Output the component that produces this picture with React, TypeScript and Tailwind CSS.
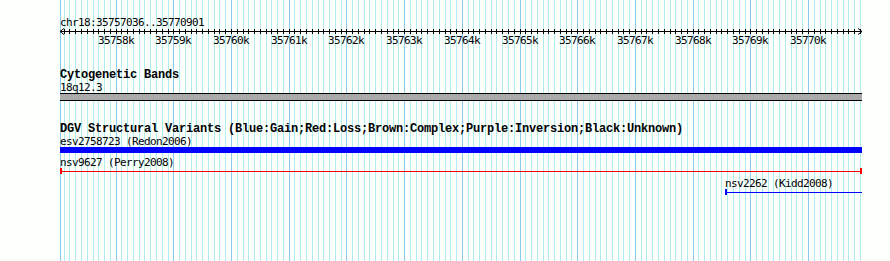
const START = 35757036;
const END = 35770901;
const LEFT = 60;
const WIDTH = 800;

const px = (bp: number) => LEFT + ((bp - START) * WIDTH) / (END - START);

const gridSteps: number[] = [];
for (let bp = 35757100; bp <= END; bp += 100) gridSteps.push(bp);

const majors = gridSteps.filter(bp => bp % 1000 === 0);

function Grid() {
  return (
    <svg className="absolute inset-0" width={890} height={261} shapeRendering="crispEdges">
      <line x1={60.5} y1={0} x2={60.5} y2={261} stroke="#8ccbf0" />
      {gridSteps.map(bp => {
        const x = Math.round(px(bp)) + 0.5;
        const major = bp % 1000 === 0;
        return (
          <line key={bp} x1={x} y1={0} x2={x} y2={261} stroke={major ? '#8ccbf0' : '#aeeeee'} />
        );
      })}
    </svg>
  );
}

function Ruler() {
  return (
    <svg width={890} height={20} className="block" shapeRendering="crispEdges">
      <line x1={60} y1={3.5} x2={862} y2={3.5} stroke="#000" />
      <path d="M60 3.5 L64 0.5 M60 3.5 L64 6.5" stroke="#000" shapeRendering="auto" />
      <path d="M862 3.5 L858 0.5 M862 3.5 L858 6.5" stroke="#000" shapeRendering="auto" />
      {gridSteps.map(bp => {
        const x = Math.round(px(bp)) + 0.5;
        return <line key={bp} x1={x} y1={1} x2={x} y2={6} stroke="#000" />;
      })}
      {majors.map(bp => (
        <text
          key={bp}
          x={Math.round(px(bp))}
          y={16}
          textAnchor="middle"
          fontSize={11}
          letterSpacing={-0.62}
          fontFamily="'DejaVu Sans Mono', monospace"
          fill="#000"
        >
          {bp / 1000}k
        </text>
      ))}
    </svg>
  );
}

function Label({ children, className = '' }: { children: string; className?: string }) {
  return (
    <div className={`pl-[60px] font-['DejaVu_Sans_Mono',monospace] text-[11px] leading-[11px] tracking-[-0.62px] whitespace-nowrap ${className}`}>
      {children}
    </div>
  );
}

function Heading({ children, className = '' }: { children: string; className?: string }) {
  return (
    <div className={`pl-[60px] text-[12px] leading-[13px] font-bold tracking-[-0.2px] whitespace-nowrap ${className}`}>
      {children}
    </div>
  );
}

function Segment({ color, start, end, capLeft = true, capRight = true }: { color: string; start: number; end: number; capLeft?: boolean; capRight?: boolean }) {
  return (
    <div className="flex h-[6px] items-center" style={{ marginLeft: start, width: end - start }}>
      {capLeft && <div className="h-[6px] w-[2px]" style={{ background: color }} />}
      <div className="h-px flex-1" style={{ background: color }} />
      {capRight && <div className="h-[6px] w-[2px]" style={{ background: color }} />}
    </div>
  );
}

export default function App() {
  return (
    <div
      className="relative h-[261px] w-[890px] overflow-hidden bg-[#fdfffd] text-black"
      style={{ fontFamily: "'Liberation Mono', 'DejaVu Sans Mono', monospace" }}
    >
      <Grid />
      <div className="relative flex flex-col">
        <div className="pl-[60px] pt-[17px] font-['DejaVu_Sans_Mono',monospace] text-[11px] leading-[11px] tracking-[-0.62px]">chr18:35757036..35770901</div>
        <Ruler />

        <Heading className="mt-[21px]">Cytogenetic Bands</Heading>
        <Label>18q12.3</Label>
        <div className="ml-[60px] h-[8px] w-[802px] border-y border-black bg-[#aaaaaa]" />

        <Heading className="mt-[22px]">DGV Structural Variants (Blue:Gain;Red:Loss;Brown:Complex;Purple:Inversion;Black:Unknown)</Heading>
        <Label>esv2758723 (Redon2006)</Label>
        <div className="ml-[60px] h-[6px] w-[802px] bg-[#0000ff]" />

        <Label className="mt-[4px]">nsv9627 (Perry2008)</Label>
        <Segment color="#ff0000" start={60} end={862} />

        <Label className="mt-[4px] pl-[725px]">nsv2262 (Kidd2008)</Label>
        <Segment color="#0000ff" start={725} end={862} capRight={false} />
      </div>
    </div>
  );
}
